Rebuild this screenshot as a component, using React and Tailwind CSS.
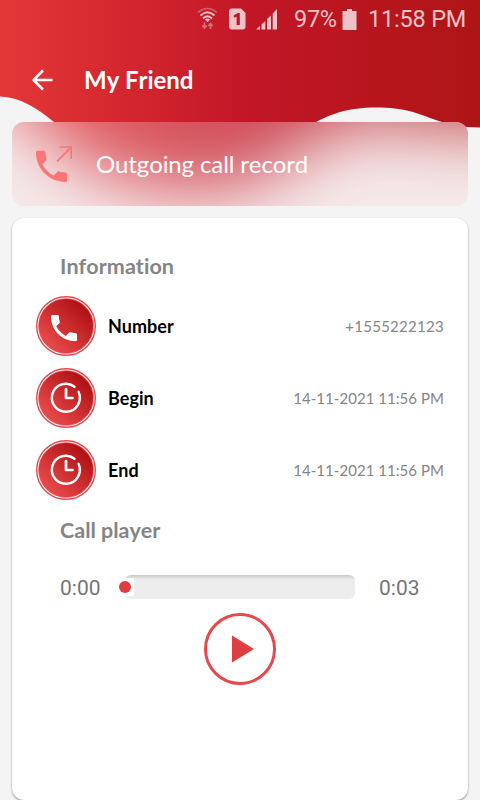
import React, { useState } from "react";

const details = [
  { label: "Number", value: "+1555222123", icon: "phone" },
  { label: "Begin", value: "14-11-2021 11:56 PM", icon: "clock" },
  { label: "End", value: "14-11-2021 11:56 PM", icon: "clock" },
];

const PHONE_PATH =
  "M6.62 10.79c1.44 2.83 3.76 5.14 6.59 6.59l2.2-2.2c.27-.27.67-.36 1.02-.24 1.12.37 2.33.57 3.57.57.55 0 1 .45 1 1V20c0 .55-.45 1-1 1-9.39 0-17-7.61-17-17 0-.55.45-1 1-1h3.5c.55 0 1 .45 1 1 0 1.25.2 2.45.57 3.57.11.35.03.74-.25 1.02l-2.2 2.2z";

const WAVE_PATH =
  "M0 0H480V127.500C463 127.500 446 124 433 119C417 113 404 107.500 376 107.500C347 107.500 332 114 316 122C280 141 252 172 196 172C125 172 91 149 54 122C38 109 20 97 0 96.500Z";

// Runs past the screen edges so the blur has no pale rim
const GLASS_PATH =
  "M-60 -150H630V130H470C435 130 410 122 372 122C340 122 325 135 305 148C275 168 250 190 196 190C130 190 95 172 54 142C38 128 20 98 0 90H-60Z";

function HeaderGradient({ id }) {
  return (
    <linearGradient id={id} gradientUnits="userSpaceOnUse" x1="0" y1="0" x2="480" y2="0">
      <stop offset="0" stopColor="#e43737" />
      <stop offset="0.52" stopColor="#c21627" />
      <stop offset="1" stopColor="#ae1515" />
    </linearGradient>
  );
}

function HeaderWave() {
  return (
    <svg className="absolute left-0 top-0" width="480" height="180" viewBox="0 0 480 180">
      <defs>
        <HeaderGradient id="header" />
      </defs>
      <path d={WAVE_PATH} fill="url(#header)" />
    </svg>
  );
}

// Frosted glass look behind the call type
function BannerGlass() {
  return (
    <svg className="absolute inset-0" width="456" height="84" viewBox="12 122 456 84">
      <defs>
        <HeaderGradient id="glass" />
        <filter
          id="frost"
          filterUnits="userSpaceOnUse"
          x="-150"
          y="-150"
          width="780"
          height="500"
          colorInterpolationFilters="sRGB"
        >
          <feGaussianBlur stdDeviation="34" />
        </filter>
      </defs>
      <rect x="12" y="122" width="456" height="84" fill="#f6eeee" />
      <path d={GLASS_PATH} fill="url(#glass)" filter="url(#frost)" />
      <rect x="12" y="122" width="456" height="84" fill="#f3dfe1" opacity="0.27" />
    </svg>
  );
}

function StatusBar() {
  return (
    <div className="flex h-[38px] items-center pl-[197px] font-[Roboto,sans-serif] text-[#eec2c7]">
      <svg width="22" height="24" viewBox="0 0 22 24" fill="none">
        <path d="M1 5.500Q10.500-2.500 20 5.500" stroke="currentColor" strokeWidth="1.600" opacity="0.4" />
        <path d="M3.500 8.500Q10.500 2 17.500 8.500M6 11.500Q10.500 7 15 11.500" stroke="currentColor" strokeWidth="1.900" />
        <path d="M8 12.500Q10.500 10.500 13 12.500L10.500 15.200Z" fill="currentColor" />
        <path d="M7.500 15.500V21M5.300 18.500L7.500 21L9.700 18.500M13.500 22V16.500M11.300 19L13.500 16.500L15.700 19" stroke="currentColor" strokeWidth="1.700" opacity="0.5" />
      </svg>
      <svg className="ml-[10px]" width="17" height="22" viewBox="0 0 17 22">
        <path d="M3 0.500H12L16.500 5V18.500Q16.500 21.500 13.500 21.500H3Q0 21.500 0 18.500V3.500Q0 0.500 3 0.500Z" fill="currentColor" />
        <path d="M4.800 7.300L8.800 5H10.800V17H7.600V8.800L4.800 9.800Z" fill="#be1725" />
      </svg>
      <svg className="ml-[10px]" width="22" height="22" viewBox="0 0 22 22" fill="currentColor">
        <path d="M0 21.500L4 18V21.500ZM5.500 16.500L9.300 13V21.500H5.500ZM11 11L15 7.500V21.500H11ZM16.700 5.500L21 1V21.500H16.700Z" />
      </svg>
      <span className="ml-[16px] w-[44px] whitespace-nowrap pt-[2px] text-[23.500px] leading-none tracking-[-0.300px]">97%</span>
      <svg className="ml-[4px]" width="15" height="21" viewBox="0 0 15 21" fill="currentColor">
        <path d="M5 0H10V2H14.500V21H0.500V2H5Z" />
      </svg>
      <span className="ml-[11px] whitespace-nowrap pt-[2px] text-[23.500px] leading-none tracking-[-0.200px]">11:58 PM</span>
    </div>
  );
}

function DetailIcon({ type }) {
  return (
    <svg className="shrink-0" width="60" height="60" viewBox="0 0 60 60" fill="none">
      <defs>
        <linearGradient id={`disc-${type}`} x1="0.15" y1="0.9" x2="0.85" y2="0.15">
          <stop offset="0" stopColor="#ea4d4e" />
          <stop offset="1" stopColor="#b01013" />
        </linearGradient>
      </defs>
      <circle cx="30" cy="30" r="29.300" fill="#fff" stroke="#e5484b" strokeWidth="1.400" />
      <circle cx="30" cy="30" r="27.300" fill={`url(#disc-${type})`} stroke="#df3a3e" strokeWidth="0.700" />
      {type === "phone" ? (
        <path d={PHONE_PATH} fill="#fff" transform="translate(10.600 14.700) scale(1.450)" />
      ) : (
        <g stroke="#fff" strokeWidth="2.400" strokeLinecap="round" strokeLinejoin="round">
          <path d="M38.500 18.800A14 14 0 1 0 42.500 23.800" />
          <path d="M30 21V30H36.500" strokeWidth="2.700" />
        </g>
      )}
    </svg>
  );
}

function App() {
  const [playing, setPlaying] = useState(false);

  return (
    <div className="relative flex h-[800px] w-[480px] flex-col overflow-hidden bg-[#f4f4f4] font-[Lato,sans-serif] [font-kerning:none] [font-variant-ligatures:none]">
      <HeaderWave />
      <div className="relative flex min-h-0 flex-1 flex-col">
        <StatusBar />

        {/* Toolbar */}
        <div className="flex h-[84px] items-center pl-[30px]">
          <button type="button" aria-label="Back">
            <svg width="24" height="24" viewBox="0 0 24 24" fill="none" stroke="#fff" strokeWidth="2.500">
              <path d="M22.500 12H3.500M13 2.500L3.500 12L13 21.500" strokeLinejoin="round" />
            </svg>
          </button>
          <h1 className="ml-[30px] text-[24px] font-bold leading-none tracking-[-0.050px] text-white">
            My Friend
          </h1>
        </div>

        {/* Call type */}
        <div className="relative mx-3 flex h-[84px] shrink-0 items-center overflow-hidden rounded-xl pl-6">
          <BannerGlass />
          <svg className="relative" width="36" height="36" viewBox="0 0 36 36" fill="none">
            <path d={PHONE_PATH} fill="#fb7476" transform="translate(-5.200 -0.400) scale(1.730)" />
            <path d="M23.500 1H35.300V13M35 1.300L21 15.300" stroke="#fb7476" strokeWidth="1.700" />
          </svg>
          <span className="relative ml-6 text-[24px] leading-none tracking-[-0.120px] text-white">
            Outgoing call record
          </span>
        </div>

        {/* Details card */}
        <div className="mx-3 mt-3 flex flex-1 flex-col rounded-xl bg-white px-6 pt-[33px] shadow-[0_1px_2px_rgba(0,0,0,0.45)]">
          <h2 className="pl-6 text-[21.500px] font-bold leading-[30px] tracking-[0.050px] text-[#858585]">
            Information
          </h2>
          <div className="mt-[15px] flex flex-col gap-3">
            {details.map((item) => (
              <div key={item.label} className="flex h-[60px] items-center">
                <DetailIcon type={item.icon} />
                <span className="ml-3 text-[18px] font-bold text-black">
                  {item.label}
                </span>
                <span
                  className={`ml-auto text-[15px] text-[#858585] ${
                    item.icon === "phone" ? "tracking-[0.280px]" : "tracking-[0.050px]"
                  }`}
                >
                  {item.value}
                </span>
              </div>
            ))}
          </div>
          <h2 className="mt-[15px] pl-6 text-[21.500px] font-bold leading-[30px] text-[#858585]">
            Call player
          </h2>
          <div className="mt-[30px] flex h-6 items-center px-6 font-[Roboto,sans-serif] text-[21px] text-[#757575]">
            <span className="w-[59px] pt-[3px]">0:00</span>
            <div className="relative h-6 w-[236px]">
              <div className="ml-[6px] h-6 w-[230px] rounded-md bg-gradient-to-b from-[#c5c9c7] via-[#ededed] via-20% to-[#ededed]" />
              <div className="absolute left-0 top-[3px] flex h-[18px] w-[15px] items-center bg-white">
                <div className="size-3 rounded-full bg-[#df3d40]" />
              </div>
            </div>
            <span className="ml-6 pt-[3px]">0:03</span>
          </div>
          <button
            type="button"
            aria-label="Play"
            onClick={() => setPlaying(!playing)}
            className="mt-[14px] flex size-[72px] items-center justify-center self-center rounded-full border-3 border-[#e5484d]"
          >
            <svg width="24" height="28" viewBox="0 0 24 28" className="ml-[5px]">
              {playing ? (
                <path d="M2 1H8V27H2ZM14 1H20V27H14Z" fill="#df3d40" />
              ) : (
                <path d="M1 0.500L23 14L1 27.500Z" fill="#df3d40" />
              )}
            </svg>
          </button>
        </div>
      </div>
    </div>
  );
}

export default App;
